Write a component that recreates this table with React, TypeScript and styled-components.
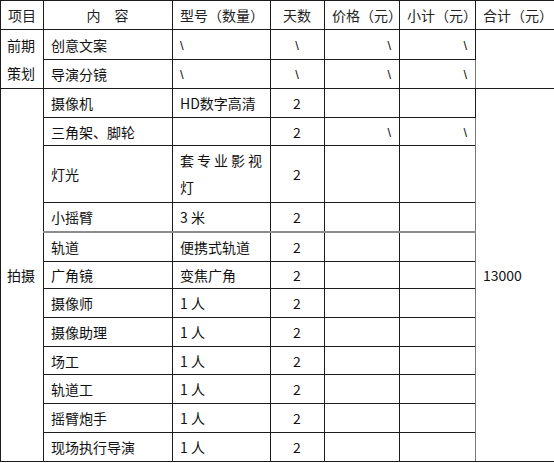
import * as React from "react";
import styled, { createGlobalStyle } from "styled-components";

const GlobalStyle = createGlobalStyle`
  html, body {
    margin: 0;
    padding: 0;
    background: #fff;
  }
  body {
    font-family: "Noto Sans CJK SC", "Liberation Sans", sans-serif;
    color: #111;
  }
`;

type Align = "left" | "center" | "right";

const Sheet = styled.table`
  width: 554px;
  table-layout: fixed;
  border-collapse: collapse;
  border: 1px solid #6e6e6e;
  font-size: 14px;
`;

const Row = styled.tr<{ $h: number; $heavy?: boolean }>`
  height: ${(p) => p.$h}px;

  td {
    ${(p) => (p.$heavy ? "border-bottom: 2px solid #8c8c8c;" : "")}
  }
`;

const Cell = styled.td<{ $align?: Align; $soft?: boolean }>`
  border: 1px solid #1c1c1c;
  ${(p) => (p.$soft ? "border-left-color: #777;" : "")}
  padding: 0 8px 0 7px;
  text-align: ${(p) => p.$align ?? "left"};
  vertical-align: middle;
  line-height: 18px;
  white-space: nowrap;
  overflow: hidden;
`;

const HeadCell = styled.th<{ $align?: Align; $soft?: boolean }>`
  border: 1px solid #1c1c1c;
  ${(p) => (p.$soft ? "border-left-color: #777;" : "")}
  padding: 0 8px 0 7px;
  text-align: ${(p) => p.$align ?? "left"};
  vertical-align: middle;
  line-height: 18px;
  font-weight: normal;
  white-space: nowrap;
  color: #222;
`;

const GroupCell = styled(Cell)`
  padding: 0 6px;
  line-height: 28px;
`;

const Spread = styled(Cell)`
  white-space: normal;
  letter-spacing: 3px;
  padding-right: 4px;
  line-height: 27px;
`;

const Slash = styled.span`
  font-family: "Liberation Sans", sans-serif;
  font-size: 13px;
`;

type Item = { name: string; model: string; days: string; slashes?: boolean; h: number; heavy?: boolean; spread?: boolean };

const shoot: Item[] = [
  { name: "摄像机", model: "HD数字高清", days: "2", h: 29 },
  { name: "三角架、脚轮", model: "", days: "2", slashes: true, h: 28 },
  { name: "灯光", model: "套专业影视灯", days: "2", h: 57, spread: true },
  { name: "小摇臂", model: "3 米", days: "2", h: 29, heavy: true },
  { name: "轨道", model: "便携式轨道", days: "2", h: 30 },
  { name: "广角镜", model: "变焦广角", days: "2", h: 27 },
  { name: "摄像师", model: "1 人", days: "2", h: 29 },
  { name: "摄像助理", model: "1 人", days: "2", h: 29 },
  { name: "场工", model: "1 人", days: "2", h: 28 },
  { name: "轨道工", model: "1 人", days: "2", h: 29 },
  { name: "摇臂炮手", model: "1 人", days: "2", h: 29 },
  { name: "现场执行导演", model: "1 人", days: "2", h: 29 },
];

const planning = [
  { name: "创意文案", h: 30 },
  { name: "导演分镜", h: 29 },
];

const widths = [43, 129, 98, 54, 75, 76, 79];

const App = () => {
  return (
    <>
      <GlobalStyle />
      <Sheet>
        <colgroup>
          {widths.map((w, i) => (
            <col key={i} style={{ width: w }} />
          ))}
        </colgroup>
        <tbody>
          <Row $h={29}>
            <HeadCell>项目</HeadCell>
            <HeadCell $align="center">内　容</HeadCell>
            <HeadCell>型号（数量）</HeadCell>
            <HeadCell $align="center">天数</HeadCell>
            <HeadCell>价格（元）</HeadCell>
            <HeadCell>小计（元）</HeadCell>
            <HeadCell $soft>合计（元）</HeadCell>
          </Row>

          {planning.map((p, i) => (
            <Row key={p.name} $h={p.h}>
              {i === 0 && (
                <GroupCell rowSpan={2}>
                  前期
                  <br />
                  策划
                </GroupCell>
              )}
              <Cell>{p.name}</Cell>
              <Cell>
                <Slash>\</Slash>
              </Cell>
              <Cell $align="center">
                <Slash>\</Slash>
              </Cell>
              <Cell $align="right">
                <Slash>\</Slash>
              </Cell>
              <Cell $align="right">
                <Slash>\</Slash>
              </Cell>
              {i === 0 && <Cell rowSpan={2} $soft />}
            </Row>
          ))}

          {shoot.map((s, i) => (
            <Row key={s.name} $h={s.h} $heavy={s.heavy}>
              {i === 0 && <GroupCell rowSpan={shoot.length}>拍摄</GroupCell>}
              <Cell>{s.name}</Cell>
              {s.spread ? <Spread>{s.model}</Spread> : <Cell>{s.model}</Cell>}
              <Cell $align="center">{s.days}</Cell>
              <Cell $align="right">{s.slashes && <Slash>\</Slash>}</Cell>
              <Cell $align="right">{s.slashes && <Slash>\</Slash>}</Cell>
              {i === 0 && (
                <Cell rowSpan={shoot.length} $soft>
                  13000
                </Cell>
              )}
            </Row>
          ))}
        </tbody>
      </Sheet>
    </>
  );
};

export default App;
